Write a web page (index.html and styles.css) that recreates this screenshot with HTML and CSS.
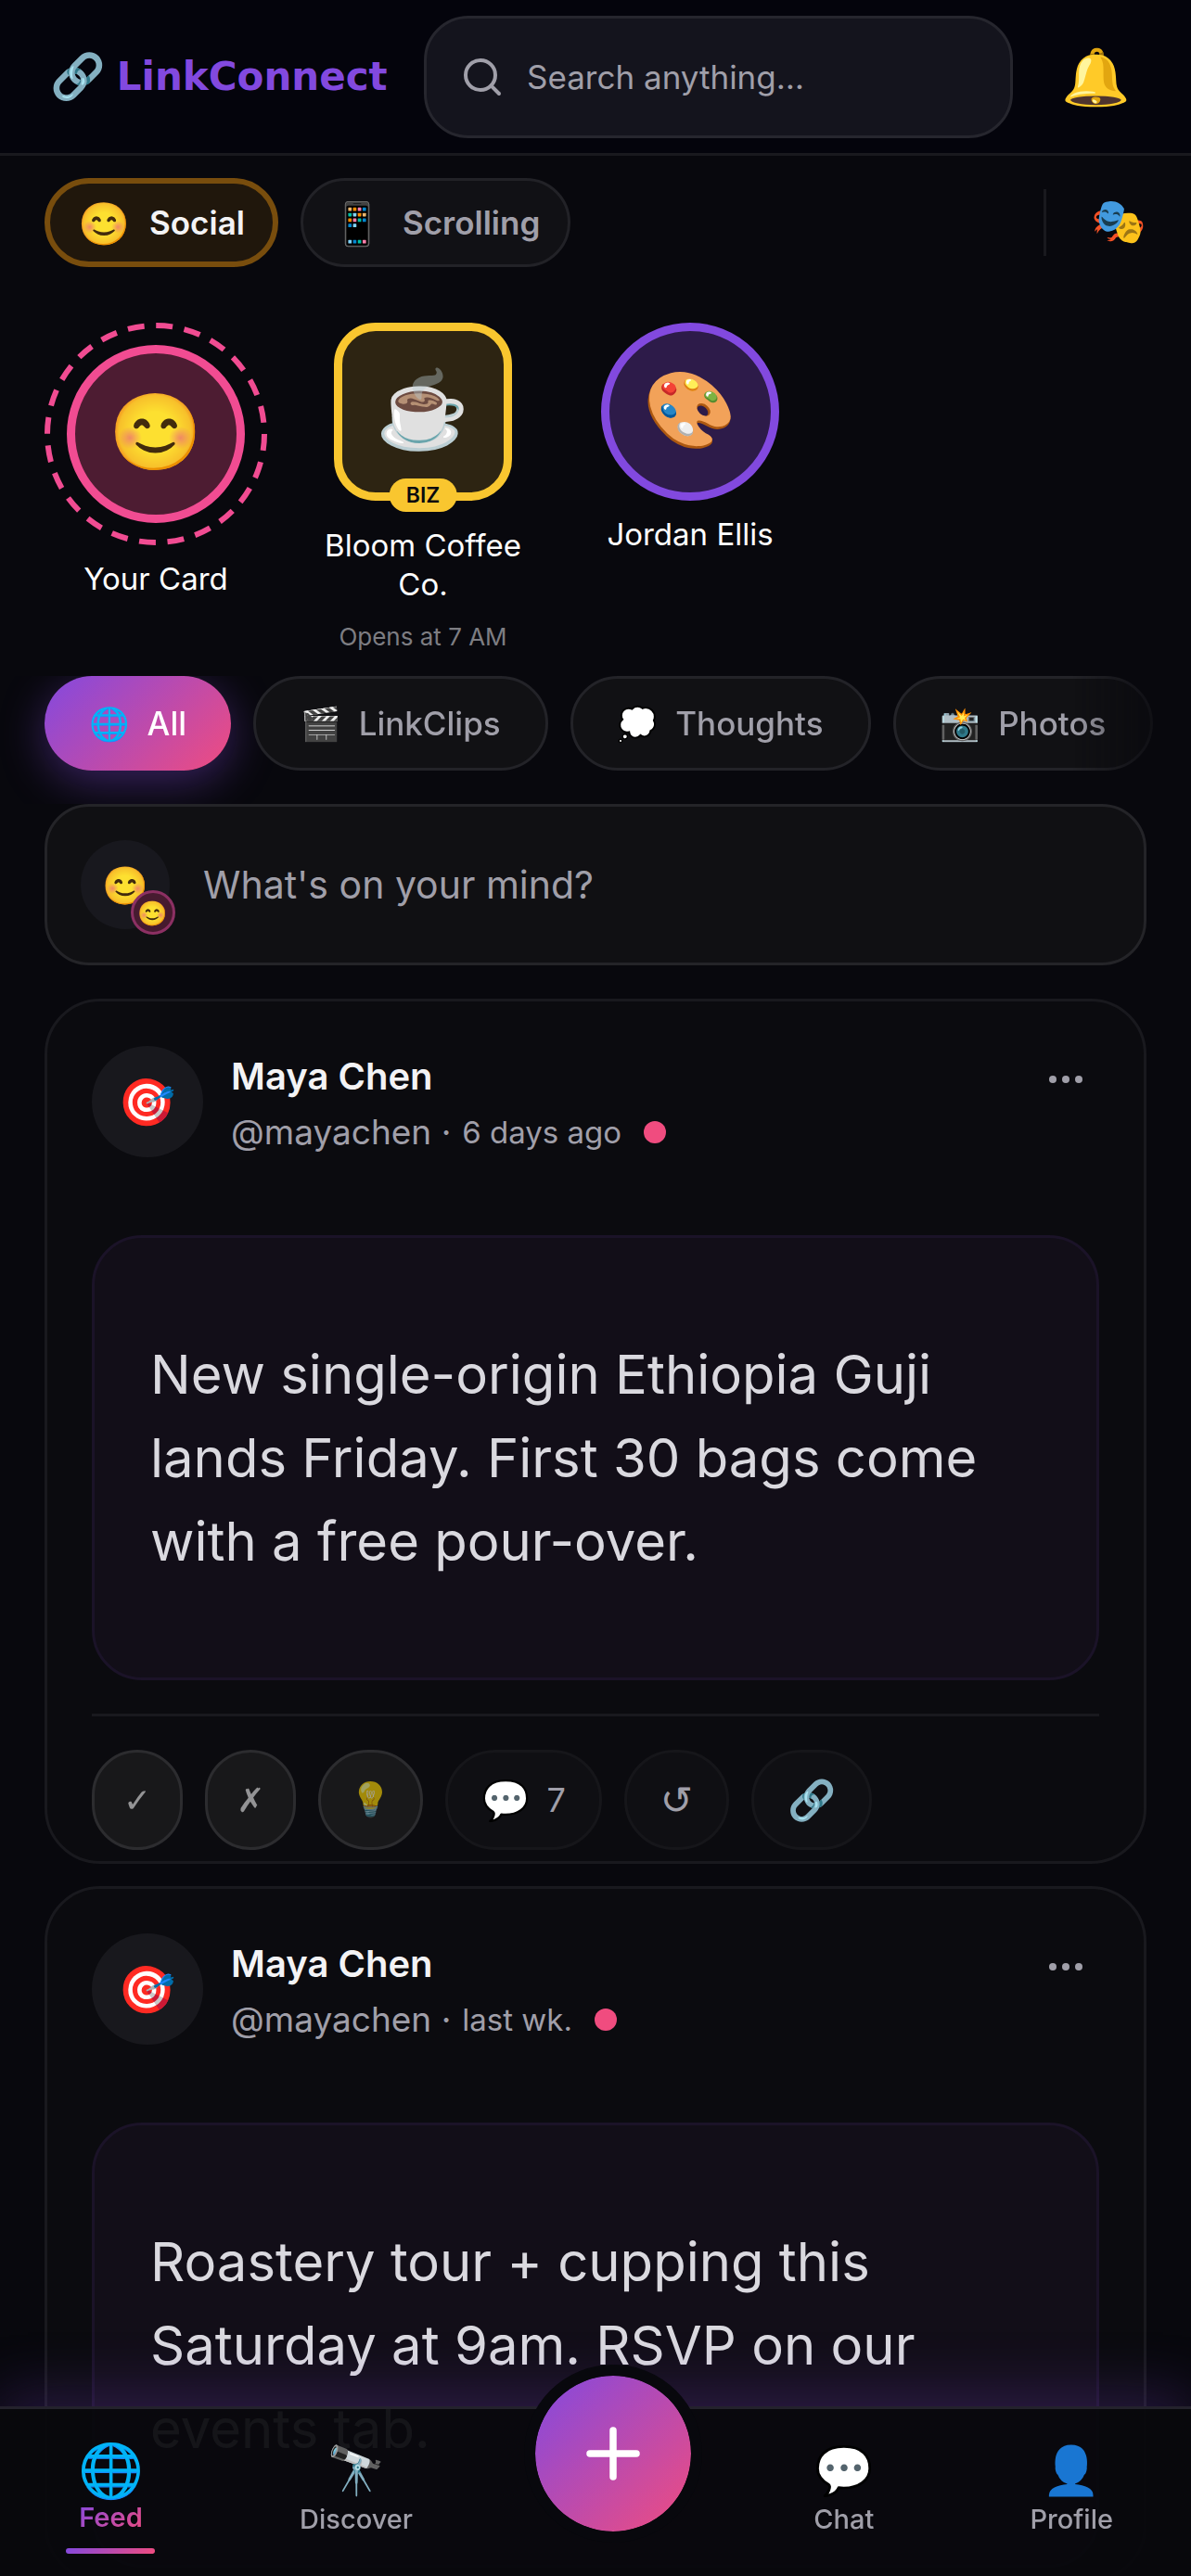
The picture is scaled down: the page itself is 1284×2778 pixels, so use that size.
FILE: index.html
```html
<!DOCTYPE html>
<html lang="en">
<head>
    <meta charset="UTF-8">
    <meta name="viewport" content="width=device-width, initial-scale=1.0">
    <title>LinkConnect</title>
    <link rel="stylesheet" href="styles.css">
</head>
<body>
    <header class="header">
        <a href="#" class="logo"><span class="logo-icon">🔗</span>LinkConnect</a>
        <label class="search">
            <svg class="search-icon" viewBox="0 0 24 24" fill="none" stroke="currentColor" stroke-width="2" stroke-linecap="round">
                <circle cx="11" cy="11" r="8"/>
                <path d="M21 21l-4.3-4.3"/>
            </svg>
            <input type="search" class="search-input" placeholder="Search anything…" aria-label="Search">
        </label>
        <button class="bell" aria-label="Notifications">🔔</button>
    </header>

    <main class="feed">
        <div class="modes">
            <button class="mode active"><span class="mode-icon">😊</span>Social</button>
            <button class="mode"><span class="mode-icon">📱</span>Scrolling</button>
            <button class="mask" aria-label="Switch persona">🎭</button>
        </div>

        <section class="cards">
            <a href="#" class="card">
                <span class="ring">
                    <svg class="ring-dash" viewBox="0 0 240 240" fill="none">
                        <circle cx="120" cy="120" r="117" stroke="#f14c92" stroke-width="6" stroke-dasharray="18 12.63"/>
                    </svg>
                    <span class="card-avatar pink">😊</span>
                </span>
                <span class="card-name">Your Card</span>
            </a>
            <a href="#" class="card">
                <span class="card-avatar biz">☕<span class="biz-badge">BIZ</span></span>
                <span class="card-name biz-name">Bloom Coffee Co.</span>
                <span class="card-hours">Opens at 7 AM</span>
            </a>
            <a href="#" class="card">
                <span class="card-avatar purple">🎨</span>
                <span class="card-name">Jordan Ellis</span>
            </a>
        </section>

        <nav class="tabs">
            <button class="tab active"><span class="tab-icon">🌐</span>All</button>
            <button class="tab"><span class="tab-icon">🎬</span>LinkClips</button>
            <button class="tab"><span class="tab-icon">💭</span>Thoughts</button>
            <button class="tab"><span class="tab-icon">📸</span>Photos</button>
        </nav>

        <button class="composer">
            <span class="composer-avatar">😊<span class="composer-badge">😊</span></span>
            What's on your mind?
        </button>

        <article class="post">
            <div class="post-header">
                <span class="post-avatar">🎯</span>
                <div class="post-author">
                    <h2 class="post-name">Maya Chen</h2>
                    <p class="post-meta">@mayachen · <span class="post-time">6 days ago</span><span class="post-dot"></span></p>
                </div>
                <button class="post-menu" aria-label="More"><i></i><i></i><i></i></button>
            </div>
            <p class="post-text">New single-origin Ethiopia Guji lands Friday. First 30 bags come with a free pour-over.</p>
            <div class="post-actions">
                <button class="action vote" aria-label="Agree"><span>✓</span></button>
                <button class="action vote" aria-label="Disagree"><span>✗</span></button>
                <button class="action vote" aria-label="Insightful"><span>💡</span></button>
                <button class="action"><span class="action-icon">💬</span>7</button>
                <button class="action" aria-label="Repost"><span class="action-icon">↺</span></button>
                <button class="action" aria-label="Copy link"><span class="action-icon">🔗</span></button>
            </div>
        </article>

        <article class="post">
            <div class="post-header">
                <span class="post-avatar">🎯</span>
                <div class="post-author">
                    <h2 class="post-name">Maya Chen</h2>
                    <p class="post-meta">@mayachen · <span class="post-time">last wk.</span><span class="post-dot"></span></p>
                </div>
                <button class="post-menu" aria-label="More"><i></i><i></i><i></i></button>
            </div>
            <p class="post-text">Roastery tour + cupping this Saturday at 9am. RSVP on our events tab.</p>
        </article>
    </main>

    <nav class="bottom-nav">
        <a href="#" class="nav-item active"><span class="nav-icon">🌐</span><span class="nav-label">Feed</span></a>
        <a href="#" class="nav-item"><span class="nav-icon">🔭</span><span class="nav-label">Discover</span></a>
        <button class="fab" aria-label="Create">
            <svg viewBox="0 0 24 24" fill="none" stroke="currentColor" stroke-width="3" stroke-linecap="round">
                <path d="M12 2v20M2 12h20"/>
            </svg>
        </button>
        <a href="#" class="nav-item"><span class="nav-icon">💬</span><span class="nav-label">Chat</span></a>
        <a href="#" class="nav-item"><span class="nav-icon">👤</span><span class="nav-label">Profile</span></a>
    </nav>
</body>
</html>
```

FILE: styles.css
```css
:root {
    --bg: #08080d;
    --text: #f3f3f5;
    --muted: #a09fa9;
    --line: #19191e;
    --gradient: linear-gradient(135deg, #8349df, #f04c7f);
}

* {
    margin: 0;
    padding: 0;
    box-sizing: border-box;
}

body {
    display: flex;
    flex-direction: column;
    height: 100vh;
    overflow: hidden;
    background-color: var(--bg);
    color: var(--text);
    font-family: 'Inter', 'Noto Color Emoji', 'DejaVu Sans', sans-serif;
    font-size: 35px;
}

button, input {
    font: inherit;
    color: inherit;
    background: none;
    border: none;
    outline: none;
}

button {
    cursor: pointer;
}

a {
    color: inherit;
    text-decoration: none;
}

/* header */
.header {
    display: flex;
    align-items: center;
    flex-shrink: 0;
    height: 168px;
    padding: 0 48px;
    background-color: #04040c;
    border-bottom: 3px solid var(--line);
}

.logo {
    display: flex;
    align-items: center;
    flex-shrink: 0;
    gap: 12px;
    width: 409px;
    padding-left: 6px;
    color: #8249df;
    font-family: 'DejaVu Sans', 'Noto Color Emoji', sans-serif;
    font-size: 42px;
    font-weight: 700;
}

.logo-icon {
    font-size: 48px;
}

.search {
    display: flex;
    flex: 1;
    align-items: center;
    gap: 24px;
    min-width: 0;
    height: 132px;
    padding: 0 36px;
    background-color: #14141d;
    border: 3px solid #26262e;
    border-radius: 48px;
    color: var(--muted);
}

.search-icon {
    flex-shrink: 0;
    width: 48px;
    height: 48px;
}

.search-input {
    flex: 1;
    min-width: 0;
}

.search-input::placeholder {
    color: var(--muted);
}

.bell {
    flex-shrink: 0;
    width: 108px;
    margin-left: 36px;
    font-size: 60px;
}

/* feed */
.feed {
    flex: 1;
    padding: 24px 48px 0;
    overflow-y: auto;
    scrollbar-width: none;
}

.modes {
    display: flex;
    align-items: center;
    gap: 24px;
    margin-bottom: 60px;
}

.mode {
    display: flex;
    align-items: center;
    gap: 21px;
    height: 96px;
    padding: 0 30px;
    background-color: #111115;
    border: 3px solid #222227;
    border-radius: 48px;
    color: var(--muted);
    font-weight: 600;
}

.mode.active {
    background-color: #20170c;
    border: 6px solid #784d0d;
    color: var(--text);
}

.mode-icon {
    font-size: 45px;
}

.mask {
    height: 72px;
    margin-left: auto;
    padding: 0 0 6px 48px;
    border-left: 3px solid var(--line);
    font-size: 48px;
}

.cards {
    display: flex;
    align-items: flex-start;
    gap: 48px;
    margin-bottom: 24px;
}

.card {
    display: flex;
    flex-direction: column;
    align-items: center;
    width: 240px;
    text-align: center;
}

.ring {
    position: relative;
    padding: 24px;
}

.ring-dash {
    position: absolute;
    inset: 0;
}

.card-avatar {
    position: relative;
    display: flex;
    align-items: center;
    justify-content: center;
    width: 192px;
    height: 192px;
    padding-bottom: 6px;
    border: 9px solid;
    border-radius: 50%;
    font-size: 81px;
}

.pink {
    background-color: #4d1c32;
    border-color: #f14c92;
}

.purple {
    background-color: #2d1b49;
    border-color: #8249df;
}

.biz {
    background-color: #2d2412;
    border-color: #f9c62f;
    border-radius: 45px;
}

.biz-badge {
    position: absolute;
    bottom: -21px;
    left: 50%;
    transform: translateX(-50%);
    height: 36px;
    padding: 0 18px;
    background-color: #f9c62f;
    border-radius: 18px;
    color: #0a0a0e;
    font-size: 23px;
    font-weight: 600;
    line-height: 36px;
}

.card-name {
    margin-top: 15px;
    color: #fff;
    font-size: 33px;
    line-height: 42px;
}

.biz-name {
    margin-top: 27px;
}

.card-hours {
    margin-top: 18px;
    color: #7d7d82;
    font-size: 26px;
    line-height: 36px;
}

.tabs {
    display: flex;
    gap: 24px;
    margin: 0 -48px;
    padding: 0 48px 36px;
    overflow: hidden;
    mask-image: linear-gradient(to right, #000 90%, transparent);
}

.tab {
    display: flex;
    align-items: center;
    flex-shrink: 0;
    gap: 19px;
    height: 102px;
    padding: 0 48px;
    background-color: #111114;
    border: 3px solid #232328;
    border-radius: 51px;
    color: var(--muted);
    font-weight: 500;
}

.tab.active {
    background: var(--gradient);
    border: none;
    color: #fff;
    box-shadow: 0 12px 48px rgba(131, 73, 223, 0.4);
}

.tab-icon {
    font-size: 35px;
}

.composer {
    display: flex;
    align-items: center;
    gap: 36px;
    width: 100%;
    height: 174px;
    padding: 0 36px;
    background-color: #101013;
    border: 3px solid #242428;
    border-radius: 48px;
    color: var(--muted);
    font-size: 41px;
}

.composer-avatar {
    position: relative;
    display: flex;
    align-items: center;
    justify-content: center;
    width: 96px;
    height: 96px;
    background-color: #18181e;
    border-radius: 50%;
    font-size: 40px;
}

.composer-badge {
    position: absolute;
    right: -6px;
    bottom: -6px;
    display: flex;
    align-items: center;
    justify-content: center;
    width: 48px;
    height: 48px;
    background-color: rgba(77, 28, 50, 0.9);
    border: 3px solid #8c3063;
    border-radius: 50%;
    font-size: 26px;
}

/* posts */
.post {
    margin-top: 36px;
    padding: 48px 48px 12px;
    background-color: #0b0b0f;
    border: 3px solid var(--line);
    border-radius: 60px;
}

.post + .post {
    margin-top: 24px;
}

.post-header {
    display: flex;
    align-items: flex-start;
    gap: 30px;
    margin-bottom: 81px;
}

.post-avatar {
    display: flex;
    align-items: center;
    justify-content: center;
    width: 120px;
    height: 120px;
    background-color: #18181d;
    border-radius: 50%;
    font-size: 50px;
}

.post-author {
    flex: 1;
    padding-top: 3px;
}

.post-name {
    font-size: 40px;
    font-weight: 600;
    line-height: 60px;
}

.post-meta {
    display: flex;
    align-items: center;
    gap: 12px;
    color: var(--muted);
    font-size: 37px;
    line-height: 60px;
}

.post-time {
    font-size: 33px;
}

.post-dot {
    width: 24px;
    height: 24px;
    margin-left: 12px;
    background-color: #f04c7f;
    border-radius: 50%;
}

.post-menu {
    display: flex;
    align-items: center;
    gap: 6px;
    height: 72px;
    padding: 0 18px;
}

.post-menu i {
    width: 8px;
    height: 8px;
    background-color: var(--muted);
    border-radius: 50%;
}

.post-text {
    padding: 102px 60px;
    background-color: #120e18;
    border: 3px solid #1b1328;
    border-radius: 54px;
    color: #dad9df;
    font-size: 58px;
    line-height: 90px;
}

.post-actions {
    display: flex;
    gap: 24px;
    margin-top: 36px;
    padding-top: 36px;
    border-top: 3px solid var(--line);
}

.action {
    display: flex;
    align-items: center;
    justify-content: center;
    gap: 18px;
    height: 108px;
    padding: 0 36px;
    background-color: #0f0f13;
    border: 3px solid #16161a;
    border-radius: 54px;
    color: var(--muted);
    font-size: 36px;
}

.action-icon {
    font-family: 'DejaVu Sans', 'Noto Color Emoji', sans-serif;
    font-size: 42px;
}

.vote {
    padding: 0 31px;
    background-color: #18181a;
    border-color: #2c2c2f;
    color: #e6e6e8;
    font-family: 'DejaVu Sans', 'Noto Color Emoji', sans-serif;
    font-weight: 700;
}

.vote span {
    opacity: 0.6;
}

/* bottom navigation */
.bottom-nav {
    position: fixed;
    right: 0;
    bottom: 0;
    left: 0;
    display: flex;
    justify-content: space-between;
    height: 183px;
    padding: 0 48px;
    background-color: rgba(9, 9, 13, 0.94);
    border-top: 3px solid #24222c;
    box-shadow: 0 -12px 60px rgba(131, 73, 223, 0.25);
}

.nav-item {
    display: flex;
    flex-direction: column;
    align-items: center;
    padding: 33px 36px 0;
    color: var(--muted);
    font-size: 29px;
    font-weight: 500;
}

.nav-icon {
    font-size: 51px;
    line-height: 66px;
}

.nav-label {
    line-height: 40px;
}

.nav-item.active {
    position: relative;
}

.nav-item.active .nav-icon {
    font-size: 57px;
}

.nav-item.active .nav-label {
    background: var(--gradient);
    background-clip: text;
    color: transparent;
    font-weight: 600;
    line-height: 36px;
}

.nav-item.active::after {
    content: '';
    position: absolute;
    bottom: 24px;
    width: 96px;
    height: 6px;
    background: var(--gradient);
    border-radius: 3px;
}

.fab {
    display: flex;
    align-items: center;
    justify-content: center;
    width: 192px;
    height: 192px;
    margin: -48px -12px 0;
    background: var(--gradient) padding-box;
    border: 12px solid var(--bg);
    border-radius: 50%;
    color: #fff;
}

.fab svg {
    width: 60px;
    height: 60px;
}
```
